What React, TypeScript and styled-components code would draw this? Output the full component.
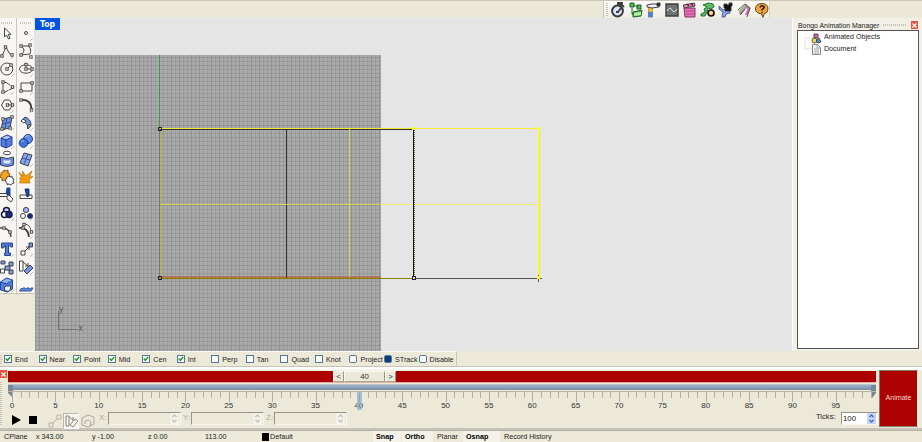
import React from "react";
import styled, { createGlobalStyle } from "styled-components";

const Global = createGlobalStyle`
  body { margin: 0; overflow: hidden; background: #ece9d8; }
  * { box-sizing: border-box; }
`;

const Window = styled.div`
  width: 922px;
  height: 442px;
  display: grid;
  grid-template-rows: 18px 333px 15px 64px 12px;
  background: #ece9d8;
  color: #333;
  font: 7.4px/9px "Liberation Sans", sans-serif;
  white-space: nowrap;
  overflow: hidden;
`;

/* ---------- top bar ---------- */
const TopBar = styled.div`
  border-top: 1px solid #c9c6b8;
  padding-left: 603px;
  background: #ebe8d7;
`;
const FloatingTools = styled.div`
  width: 167px;
  height: 17px;
  display: flex;
  align-items: center;
  gap: 2px;
  padding-left: 2px;
  border-left: 1px solid #cbc8bb;
  border-right: 1px solid #d5d2c5;
  background: linear-gradient(#fbfaf7, #efede3);
  svg { flex: none; }
`;
const Grip = styled.div<{ $vertical?: boolean; $length: number }>`
  flex: none;
  width: ${(p) => (p.$vertical ? 2 : p.$length)}px;
  height: ${(p) => (p.$vertical ? p.$length : 2)}px;
  background: repeating-linear-gradient(${(p) => (p.$vertical ? "180deg" : "90deg")}, #c6c4ba 0 1px, transparent 1px 2px);
`;

/* ---------- middle ---------- */
const Middle = styled.div`
  display: grid;
  grid-template-columns: 35px 757px 130px;
`;
const ToolColumns = styled.div`
  display: grid;
  grid-template-columns: 17px 18px;
  height: 276px;
  background: #f7f6f2;
  border-bottom: 1px solid #c9c6b8;
`;
const ToolColumn = styled.div`
  display: flex;
  flex-direction: column;
  align-items: center;
  padding: 4px 2px 0 0;
  border-right: 1px solid #cac8be;
  &:last-child { padding-right: 0; border-color: #e6e3d8; }
  svg { flex: none; margin-bottom: 2px; }
  & > div { margin-bottom: 1px; }
`;
const Viewport = styled.div`
  position: relative;
  background: #e5e5e5;
  svg { display: block; }
`;
const ViewTitle = styled.div`
  position: absolute;
  left: 0;
  top: 0;
  width: 25px;
  height: 12px;
  padding-left: 5px;
  background: #0053e1;
  color: #fff;
  font: bold 8.6px/12px "DejaVu Sans Condensed", "Liberation Sans", sans-serif;
`;
const SidePanel = styled.div`
  border-left: 1px solid #fff;
  padding: 2px 3px 2px 4px;
  background: #f1efe6;
`;
const PanelHead = styled.div`
  display: flex;
  align-items: center;
  height: 10px;
  padding-left: 1px;
  color: #222;
`;
const PanelTitle = styled.span`
  width: 85px;
  font-size: 6.9px;
`;
const Close = styled.div<{ $gap?: number }>`
  display: flex;
  align-items: center;
  justify-content: center;
  flex: none;
  width: 7px;
  height: 8px;
  margin-left: ${(p) => p.$gap ?? 0}px;
  background: #e0553b;
`;
const Tree = styled.div`
  width: 122px;
  height: 319px;
  padding: 1px 0 0 6px;
  background: #fff;
  border: 1px solid #555;
`;
const TreeRow = styled.div`
  display: flex;
  align-items: center;
  height: 11.5px;
  font-size: 7.1px;
  color: #222;
  svg { flex: none; margin-right: 2px; }
`;

/* ---------- object snaps ---------- */
const SnapBar = styled.div`
  display: grid;
  grid-template-columns: 4px repeat(13, 34.55px);
  align-items: center;
  width: 457px;
  height: 15px;
  border-top: 1px solid #faf9f4;
  border-right: 1px solid #cbc8ba;
`;
const Snap = styled.div`
  display: flex;
  align-items: center;
  gap: 3px;
  color: #222;
  font-size: 7.2px;
`;
const CheckBox = styled.div<{ $filled?: boolean; $round?: boolean }>`
  flex: none;
  width: 8px;
  height: 8px;
  border: 1px solid #557896;
  border-radius: ${(p) => (p.$round ? 2 : 0)}px;
  background: ${(p) => (p.$filled ? "#0c3d78" : "#fbfbf9")};
  svg { display: block; }
`;

/* ---------- timeline ---------- */
const Timeline = styled.div`
  display: grid;
  grid-template-columns: 8px 868px 3px 39px;
  height: 64px;
  border-top: 1px solid #c6c4b7;
  border-bottom: 2px solid #c5c3b8;
  padding-top: 3px;
  background: linear-gradient(#fff 0 2px, #ece9d8 4px);
`;
const DockEdge = styled.div`
  display: flex;
  flex-direction: column;
  gap: 4px;
  padding-right: 2px;
`;
const Tracks = styled.div`
  display: grid;
  grid-template-columns: 868px;
  grid-template-rows: 13px 7px 21px 18px;
  padding-top: 1px;
`;
const RedTrack = styled.div`
  display: flex;
  padding-left: 325px;
  height: 12px;
  border-bottom: 1px solid #e6afa2;
  background: #ad0000;
`;
const ScrollButton = styled.div<{ $w: number }>`
  width: ${(p) => p.$w}px;
  height: 11px;
  text-align: center;
  font-size: 7.8px;
  background: #ece9d8;
  border: 1px solid #faf9f2;
  border-right-color: #99968a;
  border-bottom-color: #aaa79a;
  line-height: 10px;
`;
const RangeTrack = styled.div`
  display: flex;
  justify-content: space-between;
  height: 6px;
  border-top: 1px solid #b7c5cf;
  background: linear-gradient(#9eafc0, #8ca2b9 50%, #778c9f);
  svg { flex: none; }
`;
const Ruler = styled.div`
  display: grid;
  grid-template-columns: repeat(100, 8.686px);
  padding-left: 4px;
  border-top: 1px solid #b6b4a6;
`;
const Tick = styled.div<{ $major: boolean }>`
  position: relative;
  width: 1px;
  height: ${(p) => (p.$major ? 10 : 6)}px;
  background: #b1afa1;
`;
const TickLabel = styled.div`
  position: absolute;
  left: -10px;
  top: 9px;
  width: 20px;
  text-align: center;
  font-size: 8px;
  color: #333;
`;
const Playhead = styled.div`
  position: absolute;
  left: -2px;
  top: 0;
  width: 5px;
  height: 18px;
  background: rgba(126, 163, 198, 0.65);
  border: 1px solid rgba(173, 195, 212, 0.7);
`;
const Controls = styled.div`
  display: grid;
  grid-template-columns: 18px 22px 15px 18px 18px 9px 75px 8px 75px 8px 74px 468px 25px 37px;
  align-items: center;
  height: 17px;
  color: #aaa89b;
`;
const AxisLabel = styled.span`
  font-size: 8px;
  margin-top: -6px;
`;
const Pressed = styled.div`
  width: 16px;
  height: 16px;
  padding: 1px;
  background: #f6f5ef;
  border: 1px solid #bab8ad;
  border-right-color: #fff;
  border-bottom-color: #fff;
`;
const Field = styled.div<{ $active?: boolean }>`
  display: flex;
  justify-content: space-between;
  align-items: center;
  width: ${(p) => (p.$active ? 37 : 73)}px;
  height: 13px;
  margin-top: -4px;
  padding-left: 1px;
  border: 1px solid #969489;
  border-right-color: #f7f5ed;
  border-bottom-color: #f7f5ed;
  color: #222;
  font-size: 7.8px;
  background: ${(p) => (p.$active ? "#fff" : "#ece9d8")};
`;
const TicksLabel = styled.span`
  color: #222;
  font-size: 7.6px;
  margin-top: -8px;
`;
const Animate = styled.div`
  display: flex;
  align-items: center;
  justify-content: center;
  height: 57px;
  background: #ad0000;
  color: #f4d8d0;
  border: 1px solid #81776c;
  border-right-color: #eee;
  font-size: 7.1px;
`;

/* ---------- status ---------- */
const Status = styled.div`
  display: grid;
  grid-template-columns: 32px 56px 56px 57px 57px 8px 106px 29px 32px 29px 38px 72px;
  padding-left: 4px;
  height: 12px;
  border-top: 1px solid #b5b3a7;
  color: #222;
  line-height: 12px;
  font-size: 7.2px;
`;
const StatusCell = styled.div<{ $on?: boolean }>`
  font-weight: ${(p) => (p.$on ? 700 : 400)};
  color: ${(p) => (p.$on ? "#000" : "#222")};
  background: ${(p) => (p.$on ? "#f4f2e9" : "transparent")};
  padding-left: ${(p) => (p.$on ? 3 : 0)}px;
  margin-left: ${(p) => (p.$on ? -3 : 0)}px;
  margin-right: ${(p) => (p.$on ? 4 : 0)}px;
`;
const Swatch = styled.div`
  width: 7px;
  height: 8px;
  margin-top: 2px;
  background: #000;
`;

const Icon = ({ children, size = 16 }: { children: React.ReactNode; size?: number }) => (
  <svg width={size} height={size} viewBox="0 0 16 16" fill="none" stroke="#3c3c3c" strokeWidth=".95" overflow="visible">
    {children}
  </svg>
);

const Dots = ({ at, fill = "#fff" }: { at: number[][]; fill?: string }) => (
  <g fill={fill}>
    {at.map(([x, y], i) => (
      <rect key={i} x={x - 1.2} y={y - 1.2} width="2.4" height="2.4" strokeWidth=".9" />
    ))}
  </g>
);
const Corner = () => <path d="M12 16l3-3" stroke="#b1afa6" strokeWidth=".8" />;

const leftIcons = [
  <path d="M5.5 3v9l2-2 2 4 1.6-.8-2-3.8h3z" fill="#fff" />,
  <><path d="M3 13l4-9 3 6 3 2" /><Dots at={[[3, 13], [6.5, 4], [13, 12]]} /><Corner /></>,
  <><circle cx="7.8" cy="8" r="6" /><path d="M8 8l4-4" /><Dots at={[[8, 8], [12, 4]]} /><Corner /></>,
  <><path d="M4 3v11l10-5C11 6 8 3 4 3z" strokeDasharray="8 .7" /><Dots at={[[4, 3], [4, 13], [13.5, 8]]} /><Corner /></>,
  <><path d="M2.5 8l3-5h5l3 5-3 5h-5zM8 8h5" /><Dots at={[[8.5, 8], [13.5, 8]]} /><Corner /></>,
  <><path d="M4 4l9-2-2 11-9 2z" fill="#728ddb" /><path d="M8 3l-2 11M3 9l9-2" stroke="#264d9d" /><Dots at={[[4, 4], [13, 2], [11, 13], [3, 14]]} /><Corner /></>,
  <><path d="M2 5l6-3 5 2v8l-6 3-5-2z" fill="#527ce1" stroke="#223d8a" /><path d="M2 5l5 2 6-3M7 7v8" stroke="#223d8a" /><path d="M3 4.7l5-2 4 1.5-5 2z" fill="#adc3f5" stroke="none" /><Corner /></>,
  <><ellipse cx="8" cy="2" rx="3.5" ry="1.8" fill="#fff" /><path d="M1.5 6q6.5 3 13 0v8q-6.5 3-13 0z" fill="#678cec" /><path d="M4.5 9q3.5 1 7 0v3q-3.5 1-7 0z" fill="#e2eaff" stroke="none" /></>,
  <><path d="M2 4l2-1 1-2 2 1 2-1v3l2 1-1 2 1 2-3 1-1 2-2-1-2 1v-3l-2-1 1-2z" fill="#f8a11d" stroke="#7a5420" /><path d="M8 8l2-1 1 1 2-1v2l2 1-1 2 1 2-2 .5-1 1.5-2-1-2 .5v-2l-2-1.5 1-1.5z" fill="#fff" /></>,
  <><path d="M0 6.5h9v3H0z" fill="#fff" /><path d="M8 1h3v8L7 7z" fill="#194890" stroke="#194890" /><path d="M8 9l2-1 4 4-2 3-4-3z" fill="#fff" /></>,
  <><g strokeWidth="1.5" stroke="#151b39"><circle cx="7.5" cy="5.5" r="3" fill="#c4c9ff" /><circle cx="5.5" cy="9.5" r="3" fill="#fff" /><circle cx="10" cy="9.5" r="3" fill="#182b9a" /></g><Corner /></>,
  <><path d="M1 5q10-1 11 9" strokeWidth="1.4" /><Dots at={[[5, 5], [11, 9]]} /></>,
  <><path d="M2.5 2h11v4h-2l-1-2h-1v8h2v2.5h-6V12h1V4l-2 3h-2z" fill="#527ce1" stroke="#253f79" /><Corner /></>,
  <><path d="M2 2h4v3H2zM10 3h4v4h-4zM6 7h5v4H6zM10 11h4v4h-4z" fill="#7b9dee" /><path d="M1.5 10h4v4h-4z" fill="#fff" /></>,
  <><path d="M1.5 5l6-4 6 2v9l-5 3-7-2z" fill="#4e7ee1" stroke="#1d438b" /><path d="M1.5 5l6 2 6-4" stroke="#1d438b" /><path d="M2.5 4.7l5-3 5 1.5-5 3z" fill="#91afee" stroke="none" /><path d="M5.5 10l2-1h4v3l-2 2.5-4-1z" fill="#e9eefd" /><Corner /></>,
];
const rightIcons = [
  <><circle cx="8" cy="8" r="1.5" /><Corner /></>,
  <><path d="M3 3h7q4 2 2 8l-9 1q6-5 0-9z" /><Dots at={[[3, 3], [12, 2], [13, 14], [3, 12]]} /><Corner /></>,
  <><ellipse cx="8" cy="8" rx="6.5" ry="4.2" /><path d="M8 3v5h5" /><Dots at={[[8, 8], [8, 3.5], [14, 8]]} /><Corner /></>,
  <><path d="M3 4h11v8H3z" /><Dots at={[[3, 12], [14, 4]]} /><Corner /></>,
  <><path d="M3 3q10-1 10.5 9" strokeWidth="1.8" /><Dots at={[[3, 3], [13.5, 13]]} /><Corner /></>,
  <><path d="M3 6l4-4q6 2 6 8l-3 4q0-7-7-8z" fill="#6d92df" /><path d="M3 6l2-2 3 2-2 2zM10 10h3l-3 4z" fill="#fff" /><Corner /></>,
  <><circle cx="10" cy="6" r="4.5" fill="#5b8bea" stroke="#1b3474" /><circle cx="5.5" cy="10" r="4.3" fill="#4075dd" stroke="#1b3474" /><path d="M7 4q2-2 4-1M3 9q1-2 3-1" stroke="#a9ccff" /><Corner /></>,
  <><path d="M6 2l8 2-4 11-8-3z" fill="#88a6ec" /><path d="M10 3L6 13M4 7l8 2" stroke="#315292" /><Corner /></>,
  <path d="M1 3l4 4-.5-5L8 7l6-5-2.5 6 3.5-.5-4 3.500L12 14H1.500L3 10.500 1 9.500l2.500-1z" fill="#f79b09" stroke="#b77617" strokeWidth=".7" />,
  <><path d="M2 8h12v3.5H2z" fill="#fff" /><path d="M7 2h4v7L9 10z" fill="#1748a7" stroke="#173365" /></>,
  <><circle cx="8" cy="5" r="2.6" fill="#a8adff" /><circle cx="5" cy="11" r="2.5" fill="#fff" /><circle cx="12" cy="11" r="2.5" fill="#122590" /><Corner /></>,
  <><path d="M1 5q9-1 10 9" strokeWidth="1.7" /><path d="M3 5l4-4q6 1 6 8" strokeWidth=".8" /><Dots at={[[6, 1.5], [13.5, 9], [5, 5]]} /><Corner /></>,
  <><path d="M3 10h4v4H3zM7 10l4-4M8 6h3v3" fill="#fff" /><path d="M11 2h3.5v4H11z" fill="#6c96e7" /><Corner /></>,
  <><path d="M1.5 2H5v10H1.5z" fill="#fff" /><path d="M5 3l5 4M10 4v3H7" /><path d="M6 12l6-6 3 3-6 6z" fill="#7195e5" /><Corner /></>,
  <><path d="M3.5 11H15l-2 3H1.500z" fill="#5b8de8" stroke="#374c79" /><path d="M4 4v7M8 4v7M12 4v7" stroke="#fff" strokeWidth="1.5" /></>,
];
const bongoIcons = [
  <><circle cx="7.5" cy="9" r="5.4" fill="#dce6fd" strokeWidth="2" /><path d="M8 1h4v2H8zM12 3l2 2M8 10l3-4M6 10h3" strokeWidth="1.8" /></>,
  <><path d="M2 1h4v4H2zM9 3h4v4H9zM5 10l9-2-1 6-8 1z" fill="#53b853" stroke="#155d26" /><path d="M4 6v6h3M6 3l4 2" stroke="#126125" /><path d="M6 11l7-1v3l-7 1z" fill="#bceca6" stroke="none" /></>,
  <><path d="M2.5 4h4v11h-4z" fill="#4384df" stroke="#6583aa" /><path d="M2.5 6h4v4h-4z" fill="#ffb529" stroke="none" /><path d="M1 3l5-1h7v3L6 6 1 5z" fill="#edf0f1" /><path d="M11 1h3v3h-3z" fill="#222" /></>,
  <><path d="M2 2h12v12H2z" fill="#6f7473" strokeWidth="1.4" /><path d="M3 9q3-5 5-1t5-1" stroke="#eee" /></>,
  <><path d="M2 6h11v9H3z" fill="#ee70bc" stroke="#6e3157" /><path d="M1.5 3l11-2 .5 3L2 6z" fill="#f087c3" /><path d="M5 2l2 2M9 1.5l2 2" stroke="#472036" strokeWidth="1.4" /><path d="M4 9h8M4 12h8" stroke="#994b7c" /></>,
  <><path d="M3 3l5-2 5 1 1 3-3 2-3-1-1 4-2 4-4 0 0-2 4-2-1-3 3-2z" fill="#58bf67" stroke="#226c34" /><circle cx="11" cy="11" r="3" fill="#ffd180" stroke="#111" strokeWidth="1.7" /></>,
  <><path d="M1 4l4 4 6-1 1 4-4 1-1 3H4l1-5-4-3z" fill="#8ca9ee" stroke="#445b9a" /><path d="M6 2h3v1h2V1h3v3h-1v5H7V6H6z" fill="#111" /></>,
  <><path d="M4 12l6-8 3 3-3 6" stroke="#d56fbc" strokeWidth="2.5" /><path d="M2 8l7-6 5 4-3 9M4 13l5-6" stroke="#3c573d" /><path d="M3 10l6-6" stroke="#8fc785" strokeWidth="2" /></>,
  <><path d="M1.5 7q0-5.500 6.500-5.500 6 0 6 5.500 0 4-4 5l-1 3.500L7.500 12q-6-1-6-5z" fill="#efa43c" stroke="#664522" /><path d="M6 5.500q1-3 4-1 1 1-2 3v1" stroke="#2c1d10" strokeWidth="1.5" /><circle cx="8" cy="10.5" r=".5" /></>,
];

const Cross = () => (
  <svg width="5" height="5" viewBox="0 0 5 5" stroke="#fff" strokeWidth="1.2"><path d="M.5.5l4 4m0-4l-4 4" /></svg>
);
const Spinner = ({ blue }: { blue?: boolean }) => (
  <svg width="10" height="11" viewBox="0 0 10 11">
    <rect width="9" height="11" rx="1" fill={blue ? "#c1d3fa" : "#f3f1e8"} />
    <path d="M2.5 4l2-2 2 2M2.5 7l2 2 2-2" fill="none" stroke={blue ? "#405e98" : "#c0beb2"} strokeWidth="1.2" />
  </svg>
);

const Drawing = () => (
  <svg width="757" height="333" viewBox="35 18 757 333">
    <defs>
      <pattern id="minor" x="35" y="57" width="4" height="4" patternUnits="userSpaceOnUse">
        <path d="M.5 0v4M0 .5h4" stroke="#989898" strokeWidth=".9" />
      </pattern>
      <pattern id="major" x="39" y="57" width="20" height="20" patternUnits="userSpaceOnUse">
        <path d="M.5 0v20M0 .5h20M12.500 0v20M0 8.500h20" stroke="#919191" strokeWidth=".9" />
      </pattern>
    </defs>
    <path d="M35 55h346v296H35z" fill="#aaa" />
    <path d="M35 55h346v296H35z" fill="url(#minor)" />
    <path d="M35 55h346v296H35z" fill="url(#major)" />
    <g fill="none" shapeRendering="crispEdges">
      <path d="M159 55h1v73h-1z" fill="#3b9a46" />
      <path d="M160 276.5h221" stroke="#b27378" />
      <path d="M160 277.5h221" stroke="#b27b38" />
      <path d="M159.5 129v149" stroke="#77727c" />
      <path d="M160.5 129v149" stroke="#b9b82d" />
      <path d="M160 129.5h253M286.5 130v148" stroke="#333" />
      <path d="M160 128.5h379M539.5 129v149" stroke="#f1ed35" />
      <path d="M538.5 129v149" stroke="#ffff28" />
      <path d="M161 204.5h220M349.5 129v148" stroke="#d8d554" />
      <path d="M381 204.5h158" stroke="#f0ed6d" />
      <path d="M160 278.5h254" stroke="#878000" />
      <path d="M413.5 130v149" stroke="#111" />
      <path d="M414.5 130v149" stroke="#77713a" strokeDasharray="1 1" />
      <path d="M414 278.5h128M538.5 275v7" stroke="#555" />
      <path d="M158.5 127.5h3v3h-3zM158.5 276.5h3v3h-3z" stroke="#222" />
      <path d="M412.5 276.5h3v3h-3z" stroke="#222" fill="#ddd" />
      <path d="M412 127h3v3h-3zM537 127h3v3h-3zM537 276h3v3h-3z" fill="#ffff1c" />
      <path d="M58.5 311v18h19" stroke="#737373" />
    </g>
    <g fill="#555" fontSize="8" fontFamily="DejaVu Sans Condensed, Liberation Sans, sans-serif"><text x="59" y="312">y</text><text x="78.5" y="331">x</text></g>
  </svg>
);

const snaps = ["End", "Near", "Point", "Mid", "Cen", "Int", "Perp", "Tan", "Quad", "Knot", "Project", "STrack", "Disable"];

export default function App() {
  return (
    <>
      <Global />
      <Window>
        <TopBar>
          <FloatingTools>
            <Grip $vertical $length={13} />
            {bongoIcons.map((icon, i) => <Icon key={i}>{icon}</Icon>)}
          </FloatingTools>
        </TopBar>
        <Middle>
          <ToolColumns>
            {[leftIcons, rightIcons].map((icons, c) => (
              <ToolColumn key={c}>
                <Grip $length={12} />
                {icons.map((icon, i) => <Icon key={i}>{icon}</Icon>)}
              </ToolColumn>
            ))}
          </ToolColumns>
          <Viewport>
            <Drawing />
            <ViewTitle>Top</ViewTitle>
          </Viewport>
          <SidePanel>
            <PanelHead><PanelTitle>Bongo Animation Manager</PanelTitle><Grip $length={24} /><Close $gap={4}><Cross /></Close></PanelHead>
            <Tree>
              <TreeRow>
                <svg width="18" height="12" viewBox="0 0 18 12" stroke="#333" strokeWidth=".8">
                  <path d="M1 12V6h7" fill="none" stroke="#ddd" />
                  <path d="M10 2h4v4h-4z" fill="#e35fb5" /><circle cx="10.5" cy="8.5" r="2.5" fill="#e6d949" /><path d="M12 9l3-3 2 4-3 1z" fill="#448fd0" />
                </svg>
                Animated Objects
              </TreeRow>
              <TreeRow>
                <svg width="18" height="12" viewBox="0 0 18 12" fill="none">
                  <path d="M1 0v6h7" stroke="#ddd" /><path d="M8.5 1.5h5l3 3v7h-8z" fill="#f4f4f4" stroke="#888" /><path d="M13 2v3h3M10 6h5M10 8h5M10 10h5" stroke="#aaa" />
                </svg>
                Document
              </TreeRow>
            </Tree>
          </SidePanel>
        </Middle>
        <SnapBar>
          <Grip $vertical $length={9} />
          {snaps.map((name, i) => (
            <Snap key={name}>
              <CheckBox $round={i > 9} $filled={i === 11}>
                {i < 6 && <svg width="6" height="6" viewBox="0 0 6 6"><path d="M.8 2.5l1.5 2L5.3 1" fill="none" stroke="#219a28" strokeWidth="1.4" /></svg>}
              </CheckBox>
              {name}
            </Snap>
          ))}
        </SnapBar>
        <Timeline>
          <DockEdge><Close><Cross /></Close><Grip $vertical $length={44} /></DockEdge>
          <Tracks>
            <RedTrack>
              <ScrollButton $w={11}>&lt;</ScrollButton>
              <ScrollButton $w={41}>40</ScrollButton>
              <ScrollButton $w={11}>&gt;</ScrollButton>
            </RedTrack>
            <RangeTrack>
              <svg width="5" height="14" viewBox="0 0 5 14"><path d="M0 0h5v13L0 8z" fill="#758797" /></svg>
              <svg width="5" height="14" viewBox="0 0 5 14"><path d="M0 0h5v8L1 13H0z" fill="#758797" /></svg>
            </RangeTrack>
            <Ruler>
              {Array.from({ length: 100 }, (_, n) => (
                <Tick key={n} $major={n % 5 === 0}>
                  {n % 5 === 0 && <TickLabel>{n}</TickLabel>}
                  {n === 40 && <Playhead />}
                </Tick>
              ))}
            </Ruler>
            <Controls>
              <svg width="14" height="12"><path d="M4 0l9 5-9 5z" fill="#000" /></svg>
              <svg width="14" height="12"><path d="M3 1h8v8H3z" fill="#000" /></svg>
              <svg width="14" height="14" viewBox="0 0 14 14" fill="none" stroke="#b5b3a5"><path d="M1 9h4v4H1zM9 1h4v4H9zM5 9l4-4" /></svg>
              <Pressed><svg width="13" height="13" viewBox="0 0 13 13" fill="none" stroke="#89877b"><path d="M1 1h3v10H1zM4 2l4 3M8 2v4M5 10l5-6 3 2-5 6z" /></svg></Pressed>
              <svg width="14" height="14" viewBox="0 0 14 14" fill="none" stroke="#aaa89c"><path d="M1 4l6-3 6 2v7l-6 3-6-2zM4 10V7l4-1 2 2-1 4" /></svg>
              <AxisLabel>X:</AxisLabel><Field><span /><Spinner /></Field>
              <AxisLabel>Y:</AxisLabel><Field><span /><Spinner /></Field>
              <AxisLabel>Z:</AxisLabel><Field><span /><Spinner /></Field>
              <span />
              <TicksLabel>Ticks:</TicksLabel>
              <Field $active>100<Spinner blue /></Field>
            </Controls>
          </Tracks>
          <span />
          <Animate>Animate</Animate>
        </Timeline>
        <Status>
          <StatusCell>CPlane</StatusCell><StatusCell>x 343.00</StatusCell><StatusCell>y -1.00</StatusCell><StatusCell>z 0.00</StatusCell><StatusCell>113.00</StatusCell>
          <Swatch />
          <StatusCell>Default</StatusCell>
          <StatusCell $on>Snap</StatusCell><StatusCell $on>Ortho</StatusCell><StatusCell>Planar</StatusCell><StatusCell $on>Osnap</StatusCell>
          <StatusCell>Record History</StatusCell>
        </Status>
      </Window>
    </>
  );
}
